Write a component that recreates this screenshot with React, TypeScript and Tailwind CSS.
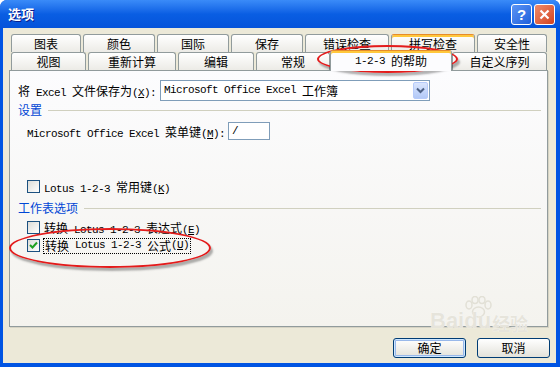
import React from "react";

// Windows XP style "选项" dialog from Excel, on the "1-2-3 的帮助" tab.

const CJK = /([\u2E80-\u9FFF\uFF00-\uFFEF]+)/;

function Txt({ s }: { s: string }) {
  const parts = s.split(CJK).filter(Boolean);
  return (
    <>
      {parts.map((p, i) =>
        CJK.test(p) ? (
          <span key={i} className="font-['Noto_Sans_CJK_SC',sans-serif] text-[12px]">
            {p}
          </span>
        ) : (
          <span
            key={i}
            className="whitespace-pre font-['Liberation_Mono','Noto_Sans_CJK_SC',monospace] text-[11px] tracking-[-0.6px]"
          >
            {p}
          </span>
        )
      )}
    </>
  );
}

function Acc({ k, colon }: { k: string; colon?: boolean }) {
  return (
    <span className="whitespace-pre font-['Liberation_Mono',monospace] text-[11px] tracking-[-0.6px]">
      (<span className="underline">{k}</span>){colon ? ":" : ""}
    </span>
  );
}

function Tab({ label, w, hot }: { label: string; w: string; hot?: boolean }) {
  return (
    <div
      className={
        "flex h-[18px] items-center justify-center rounded-t-[3px] border border-b-0 border-[#919B9C] bg-gradient-to-b from-white to-[#ECEBE6] leading-none text-black " +
        w +
        (hot ? " border-t-[#E68B2C] shadow-[inset_0_2px_0_#FFC83C]" : "")
      }
    >
      <Txt s={label} />
    </div>
  );
}

function Check({ checked }: { checked?: boolean }) {
  return (
    <span className="flex h-[13px] w-[13px] shrink-0 items-center justify-center border border-[#1C5180] bg-gradient-to-br from-[#DCDCD7] to-white">
      {checked && (
        <svg width="11" height="11" viewBox="0 0 11 11">
          <polyline points="2,5 4.5,7.5 9,2.5" fill="none" stroke="#21A121" strokeWidth="2" />
        </svg>
      )}
    </span>
  );
}

function GroupHead({ label }: { label: string }) {
  return (
    <div className="mt-[2px] flex h-[14px] items-center gap-[6px] text-[#0046D5]">
      <span className="font-['Noto_Sans_CJK_SC',sans-serif] text-[12px] leading-none">{label}</span>
      <span className="h-px flex-1 bg-[#D0D0BF]" />
    </div>
  );
}

function Btn({ label, def }: { label: string; def?: boolean }) {
  return (
    <div
      className={
        "relative z-10 flex h-[20px] w-[73px] items-center justify-center rounded-[3px] border border-[#003C74] bg-gradient-to-b from-white to-[#E3E2DA] font-['Noto_Sans_CJK_SC',sans-serif] text-[12px] leading-none text-black" +
        (def ? " shadow-[inset_0_0_0_1px_#CEE7FF,inset_0_0_0_2px_#98B8EA]" : "")
      }
    >
      {label}
    </div>
  );
}

export default function App() {
  return (
    <div className="relative flex h-[367px] w-[560px] flex-col overflow-hidden rounded-t-[7px] bg-[#0054E3] text-black select-none">
      {/* title bar */}
      <div className="flex h-[28px] shrink-0 items-center bg-gradient-to-b from-[#3A8BF8] via-[#0A5EE3] to-[#0553DA] pl-[8px] pr-[5px]">
        <span className="font-['Noto_Sans_CJK_SC',sans-serif] text-[13px] font-bold text-white [text-shadow:1px_1px_0_#0A1E8C]">
          选项
        </span>
        <div className="ml-auto flex gap-[2px]">
          <div className="flex h-[21px] w-[21px] items-center justify-center rounded-[3px] border border-white bg-gradient-to-br from-[#5B95F5] to-[#1F5FDB] font-['Liberation_Sans',sans-serif] text-[15px] font-bold leading-none text-white">
            ?
          </div>
          <div className="flex h-[21px] w-[21px] items-center justify-center rounded-[3px] border border-white bg-gradient-to-br from-[#EE8A6A] to-[#D2411B]">
            <svg width="11" height="11" viewBox="0 0 11 11">
              <path d="M1.5 1.5 L9.5 9.5 M9.5 1.5 L1.5 9.5" stroke="white" strokeWidth="2.2" />
            </svg>
          </div>
        </div>
      </div>

      {/* body */}
      <div className="mb-[4px] ml-[3px] mr-[4px] flex flex-1 flex-col bg-[#ECE9D8] pl-[6px] pr-[8px] pt-[6px]">
        <div className="ml-[2px] flex gap-[2px]">
          <Tab label="图表" w="w-[70px]" />
          <Tab label="颜色" w="w-[72px]" />
          <Tab label="国际" w="w-[72px]" />
          <Tab label="保存" w="w-[72px]" />
          <Tab label="错误检查" w="w-[84px]" />
          <Tab label="拼写检查" w="w-[84px]" hot />
          <Tab label="安全性" w="w-[70px]" />
        </div>
        <div className="ml-[2px] flex h-[18px] items-end gap-[2px]">
          <Tab label="视图" w="w-[75px]" />
          <Tab label="重新计算" w="w-[88px]" />
          <Tab label="编辑" w="w-[76px]" />
          <Tab label="常规" w="w-[74px]" />
          <div className="relative z-10 -mx-[2px] -mb-px flex h-[21px] w-[122px] items-center justify-center rounded-t-[3px] border border-b-0 border-[#919B9C] border-t-[#E68B2C] bg-[#FCFCFE] leading-none shadow-[inset_0_2px_0_#FFC83C]">
            <Txt s="1-2-3 的帮助" />
          </div>
          <Tab label="自定义序列" w="w-[95px]" />
        </div>

        {/* tab page */}
        <div className="flex h-[257px] flex-col border border-[#919B9C] bg-gradient-to-b from-[#FCFCFE] to-[#F4F3EE] pl-[8px] pr-[6px] leading-none shadow-[1px_1px_0_#D6D3C4]">
          <div className="mt-[9px] flex h-[21px] items-center">
            <span className="w-[142px] shrink-0">
              <Txt s="将 Excel 文件保存为" />
              <Acc k="X" colon />
            </span>
            <div className="flex h-[21px] w-[270px] items-center border border-[#7F9DB9] bg-white pl-[3px] pr-px">
              <Txt s="Microsoft Office Excel 工作簿" />
              <div className="ml-auto flex h-[17px] w-[15px] items-center justify-center rounded-[2px] border border-[#B6CBFA] bg-gradient-to-b from-[#D9E5FD] to-[#B3C9F7]">
                <svg width="9" height="7" viewBox="0 0 9 7">
                  <path d="M1 1.5 L4.5 5 L8 1.5" fill="none" stroke="#4D6185" strokeWidth="2" />
                </svg>
              </div>
            </div>
          </div>

          <GroupHead label="设置" />

          <div className="mt-[5px] flex h-[18px] items-center pl-[9px]">
            <span className="w-[201px] shrink-0">
              <Txt s="Microsoft Office Excel 菜单键" />
              <Acc k="M" colon />
            </span>
            <div className="flex h-[18px] w-[42px] items-center border border-[#7F9DB9] bg-white pl-[3px]">
              <Txt s="/" />
            </div>
          </div>

          <div className="mt-[40px] flex h-[13px] items-center gap-[4px] pl-[9px]">
            <Check />
            <span>
              <Txt s="Lotus 1-2-3 常用键" />
              <Acc k="K" />
            </span>
          </div>

          <div className="mt-[6px]">
            <GroupHead label="工作表选项" />
          </div>

          <div className="mt-[6px] flex h-[13px] items-center gap-[4px] pl-[9px]">
            <Check />
            <span>
              <Txt s="转换 Lotus 1-2-3 表达式" />
              <Acc k="E" />
            </span>
          </div>

          <div className="mt-[5px] flex h-[13px] items-center gap-[3px] pl-[9px]">
            <Check checked />
            <span className="flex h-[16px] items-center border border-dotted border-black px-px">
              <Txt s="转换 Lotus 1-2-3 公式" />
              <Acc k="U" />
            </span>
          </div>
        </div>

        <div className="-mr-[2px] mt-[11px] flex justify-end gap-[11px]">
          <Btn label="确定" def />
          <Btn label="取消" />
        </div>
      </div>

      {/* faint site watermark */}
      <div className="pointer-events-none absolute left-[430px] top-[296px] flex flex-col items-start text-[#E6E4DB]">
        <svg width="30" height="22" viewBox="0 0 30 22" className="ml-[33px]">
          <g fill="none" stroke="#E2E0D6" strokeWidth="1.5">
            <ellipse cx="6" cy="9" rx="3" ry="4" />
            <ellipse cx="12" cy="4" rx="3" ry="3.5" />
            <ellipse cx="19" cy="4" rx="3" ry="3.5" />
            <ellipse cx="25" cy="9" rx="3" ry="4" />
            <ellipse cx="15.5" cy="16" rx="6" ry="5" />
          </g>
        </svg>
        <div className="-mt-[8px] flex items-end gap-[1px] [text-shadow:0_0_1px_#fff]">
          <span className="font-['Liberation_Sans',sans-serif] text-[22px] font-bold leading-none">Baidu</span>
          <span className="font-['Noto_Sans_CJK_SC',sans-serif] text-[18px] font-bold leading-none">经验</span>
        </div>
      </div>

      {/* red highlight marks */}
      <div className="pointer-events-none absolute left-[317px] top-[45px] h-[28px] w-[141px] rounded-[50%] border-2 border-[#E31B1B] shadow-[2px_3px_2px_rgba(0,0,0,0.3)]" />
      <div className="pointer-events-none absolute left-[9px] top-[228px] h-[40px] w-[202px] rounded-[50%] border-2 border-[#E31B1B] shadow-[2px_3px_2px_rgba(0,0,0,0.3)]" />
    </div>
  );
}
